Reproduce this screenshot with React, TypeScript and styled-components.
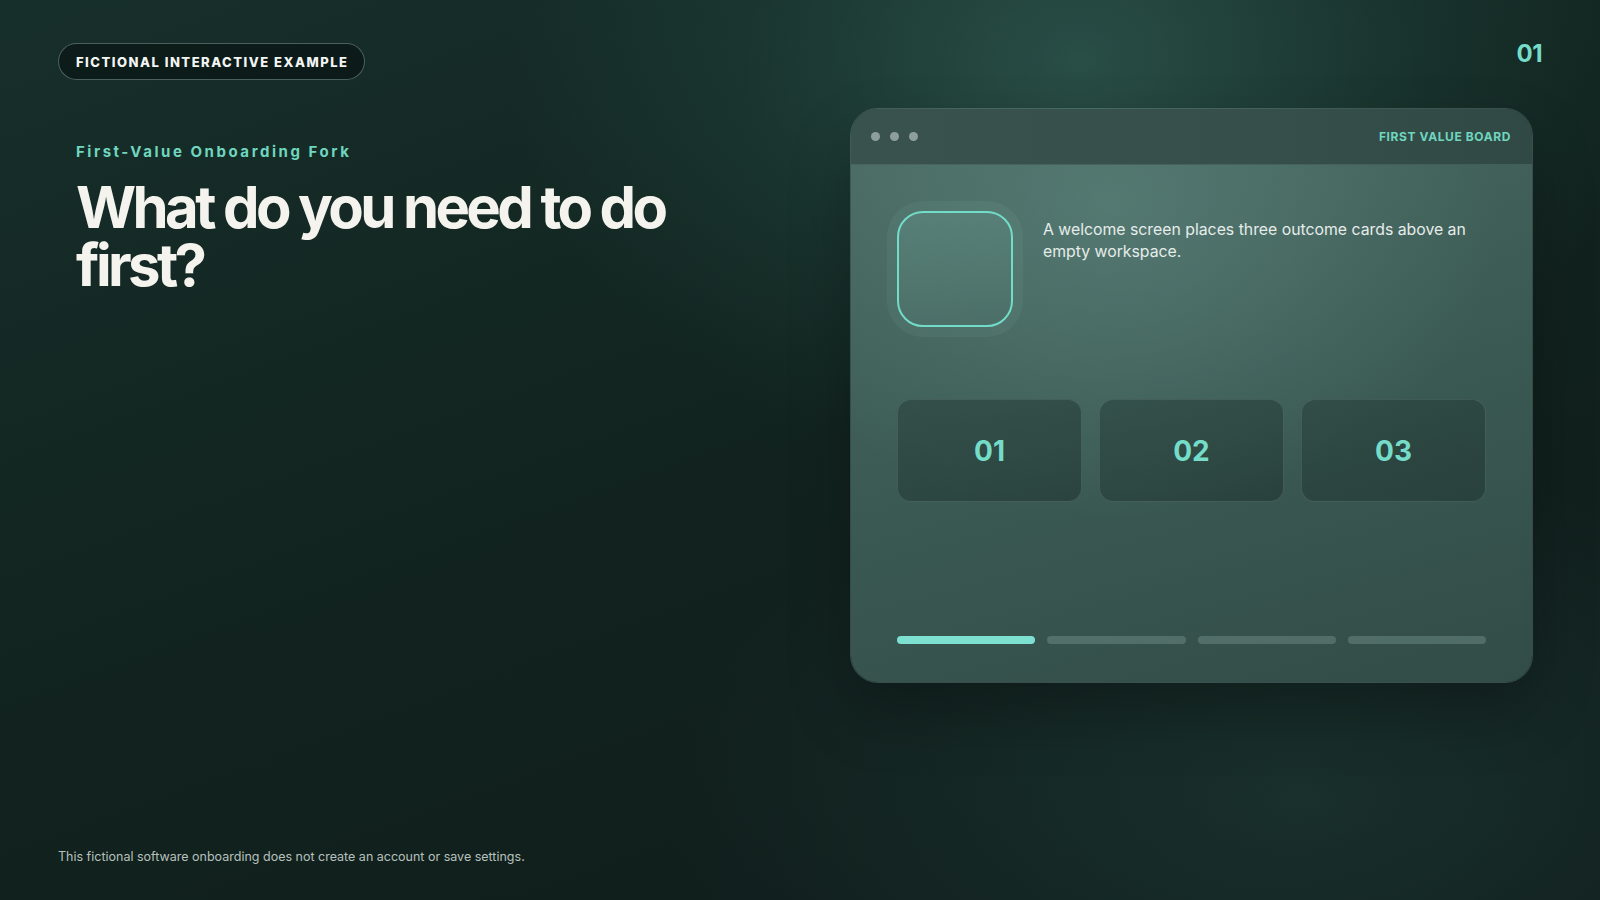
import styled, { createGlobalStyle } from "styled-components";

const GlobalStyle = createGlobalStyle`
  html, body {
    margin: 0;
    padding: 0;
    background: #101d1b;
  }
  * {
    box-sizing: border-box;
  }
`;

const Page = styled.div`
  width: 1600px;
  height: 900px;
  padding: 43px 58px 35px;
  display: flex;
  flex-direction: column;
  font-family: Inter, "Noto Sans", sans-serif;
  overflow: hidden;
  background:
    radial-gradient(ellipse 760px 560px at 1080px 60px, rgba(58, 110, 100, 0.55) 0%, rgba(40, 84, 76, 0.25) 45%, transparent 75%),
    radial-gradient(ellipse 900px 500px at 1300px 800px, rgba(34, 66, 60, 0.5) 0%, transparent 70%),
    linear-gradient(160deg, #172f2b 0%, #12241f 45%, #0f1b1a 100%);
`;

const TopBar = styled.div`
  display: flex;
  justify-content: space-between;
  align-items: flex-start;
`;

const Pill = styled.div`
  display: inline-flex;
  align-items: center;
  height: 37px;
  padding: 0 16px 0 17px;
  border: 1px solid rgba(170, 200, 192, 0.4);
  border-radius: 19px;
  background: rgba(6, 14, 13, 0.55);
  color: #f3f5f4;
  font-size: 13px;
  font-weight: 800;
  letter-spacing: 1.5px;
`;

const Counter = styled.div`
  color: #74dcc9;
  font-size: 24px;
  font-weight: 700;
  line-height: 22px;
  letter-spacing: -0.5px;
`;

const Main = styled.div`
  display: flex;
  justify-content: space-between;
  align-items: flex-start;
`;

const Intro = styled.div`
  padding-left: 18px;
  margin-top: 62px;
`;

const Eyebrow = styled.div`
  color: #6fd6bf;
  font-size: 15px;
  line-height: 20px;
  font-weight: 700;
  letter-spacing: 2.55px;
`;

const Heading = styled.h1`
  margin: 16px 0 0;
  width: 640px;
  color: #f5f3ee;
  font-size: 58px;
  line-height: 58px;
  font-weight: 700;
  letter-spacing: -3.6px;
`;

const Board = styled.div`
  width: 683px;
  height: 575px;
  margin-top: 28px;
  margin-right: 9px;
  border: 1px solid rgba(190, 220, 212, 0.22);
  border-radius: 28px;
  overflow: hidden;
  display: flex;
  flex-direction: column;
  box-shadow: 0 30px 60px rgba(0, 0, 0, 0.25);
`;

const BoardHeader = styled.div`
  height: 56px;
  flex: none;
  display: flex;
  align-items: center;
  justify-content: space-between;
  padding: 0 21px 0 20px;
  background: linear-gradient(90deg, #3a524e 0%, #364f4a 60%, #314945 100%);
  border-bottom: 1px solid rgba(200, 230, 222, 0.12);
`;

const Dots = styled.div`
  display: flex;
  gap: 10px;
`;

const Dot = styled.span`
  width: 9px;
  height: 9px;
  border-radius: 50%;
  background: #8c9f9b;
`;

const BoardLabel = styled.div`
  color: #6fd6bf;
  font-size: 12px;
  font-weight: 700;
  letter-spacing: 0.6px;
`;

const BoardBody = styled.div`
  flex: 1;
  padding: 46px 46px 38px;
  display: flex;
  flex-direction: column;
  background:
    radial-gradient(ellipse 520px 420px at 260px 40px, rgba(98, 140, 132, 0.55) 0%, transparent 75%),
    linear-gradient(165deg, #46665f 0%, #3c5b55 45%, #324c47 100%);
`;

const Welcome = styled.div`
  display: flex;
  gap: 30px;
  align-items: flex-start;
`;

const IconFrame = styled.div`
  width: 116px;
  height: 116px;
  flex: none;
  border: 2.5px solid #72dcc8;
  border-radius: 26px;
  background: linear-gradient(160deg, rgba(110, 160, 150, 0.35), rgba(80, 120, 112, 0.2));
  box-shadow: 0 0 0 10px rgba(150, 200, 190, 0.08);
`;

const WelcomeText = styled.p`
  margin: 8px 0 0;
  flex: 1;
  color: #e6ecea;
  font-size: 15.8px;
  line-height: 22px;
`;

const Cards = styled.div`
  margin-top: 72px;
  display: grid;
  grid-template-columns: repeat(3, 1fr);
  gap: 17px;
`;

const OutcomeCard = styled.div`
  height: 103px;
  border-radius: 14px;
  border: 1px solid rgba(200, 230, 222, 0.14);
  background: linear-gradient(160deg, rgba(40, 64, 59, 0.55), rgba(30, 50, 46, 0.55));
  display: flex;
  align-items: center;
  justify-content: center;
  color: #74dcc9;
  font-size: 28px;
  font-weight: 700;
`;

const Progress = styled.div`
  margin-top: auto;
  display: flex;
  gap: 12px;
`;

const Segment = styled.span<{ $active?: boolean }>`
  flex: 1;
  height: 8px;
  border-radius: 4px;
  background: ${(p) => (p.$active ? "#7ee0d0" : "rgba(150, 180, 174, 0.3)")};
`;

const Footer = styled.div`
  margin-top: auto;
  color: #b7c0bd;
  font-size: 12.5px;
  line-height: 16px;
`;

export default function App() {
  return (
    <>
      <GlobalStyle />
      <Page>
        <TopBar>
          <Pill>FICTIONAL INTERACTIVE EXAMPLE</Pill>
          <Counter>01</Counter>
        </TopBar>
        <Main>
          <Intro>
            <Eyebrow>First-Value Onboarding Fork</Eyebrow>
            <Heading>What do you need to do first?</Heading>
          </Intro>
          <Board>
            <BoardHeader>
              <Dots>
                <Dot />
                <Dot />
                <Dot />
              </Dots>
              <BoardLabel>FIRST VALUE BOARD</BoardLabel>
            </BoardHeader>
            <BoardBody>
              <Welcome>
                <IconFrame />
                <WelcomeText>
                  A welcome screen places three outcome cards above an empty workspace.
                </WelcomeText>
              </Welcome>
              <Cards>
                {["01", "02", "03"].map((n) => (
                  <OutcomeCard key={n}>{n}</OutcomeCard>
                ))}
              </Cards>
              <Progress>
                {[0, 1, 2, 3].map((i) => (
                  <Segment key={i} $active={i === 0} />
                ))}
              </Progress>
            </BoardBody>
          </Board>
        </Main>
        <Footer>This fictional software onboarding does not create an account or save settings.</Footer>
      </Page>
    </>
  );
}
